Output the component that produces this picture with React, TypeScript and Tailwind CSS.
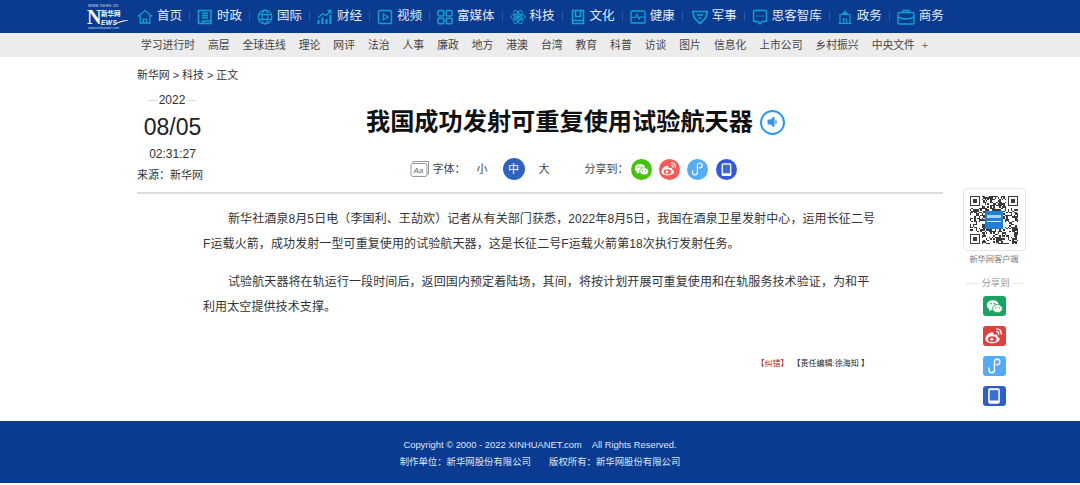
import { Fragment } from "react";

const cjk = "font-['Liberation_Sans','Noto_Sans_CJK_SC',sans-serif]";

function NavIcon({ name }: { name: string }) {
  const common = {
    width: 16,
    height: 16,
    viewBox: "0 0 16 16",
    fill: "none",
    stroke: "#12a2cc",
    strokeWidth: 1.2,
  };
  switch (name) {
    case "home":
      return (
        <svg {...common}>
          <path d="M1 7.500 8 1.500l7 6M3.200 6.500v7.500h9.600V6.500M6.300 14v-3.800h3.400V14" strokeWidth={1.3} />
        </svg>
      );
    case "news":
      return (
        <svg {...common}>
          <path d="M1.500 1.500h12.500v10.500H5.500v2.500H1.500zM5 4.200h6M5 6.600h6M5 9h6M14 12v2.500H5.500" strokeWidth={1.6} />
        </svg>
      );
    case "globe":
      return (
        <svg {...common}>
          <circle cx="8" cy="8" r="6.800" />
          <ellipse cx="8" cy="8" rx="3" ry="6.800" />
          <path d="M1.500 5.700h13M1.500 10.300h13" />
        </svg>
      );
    case "chart":
      return (
        <svg width={16} height={16} viewBox="0 0 16 16" fill="none" stroke="#12a2cc">
          <path d="M1.500 15v-4M5.500 15V8.500M9.500 15v-5M13.500 15V6" strokeWidth={2} />
          <path d="M1 8.500 6 4.500l3 2 4.500-4.500M10.500 1.500h3.500v3.500" strokeWidth={1.3} />
        </svg>
      );
    case "video":
      return (
        <svg {...common}>
          <rect x="1.500" y="1.500" width="13" height="13" rx="1.500" strokeWidth={1.4} />
          <path d="M6.300 5v6L11 8z" />
        </svg>
      );
    case "grid":
      return (
        <svg {...common}>
          <rect x="1" y="1.500" width="5.800" height="5.500" rx="1" strokeWidth={1.5} />
          <rect x="9.200" y="1.500" width="5.800" height="5.500" rx="1" strokeWidth={1.5} />
          <rect x="1" y="9.200" width="5.800" height="5.500" rx="1" strokeWidth={1.5} />
          <rect x="9.200" y="9.200" width="5.800" height="5.500" rx="1" strokeWidth={1.5} />
        </svg>
      );
    case "atom":
      return (
        <svg {...common} strokeWidth={1}>
          <ellipse cx="8" cy="8" rx="7.300" ry="3" />
          <ellipse cx="8" cy="8" rx="7.300" ry="3" transform="rotate(60 8 8)" />
          <ellipse cx="8" cy="8" rx="7.300" ry="3" transform="rotate(120 8 8)" />
          <circle cx="8" cy="8" r="1.500" fill="#12a2cc" />
        </svg>
      );
    case "book":
      return (
        <svg {...common}>
          <path d="M2.500 1.500h11v13h-11zM5.500 1.500v6h5v-6M2.500 11.500h11" strokeWidth={1.6} />
        </svg>
      );
    case "health":
      return (
        <svg {...common}>
          <rect x="1" y="2" width="14" height="12" rx="1" strokeWidth={1.4} />
          <path d="M1 8.500h4.500l1.500-3 2 4.500 1.500-2h4.500" />
        </svg>
      );
    case "shield":
      return (
        <svg {...common} className="ml-[2px]">
          <path d="M.5 2.500h15L13.500 9 8 14.500 2.500 9zM5 6h6M6.500 9h3" strokeWidth={1.7} />
        </svg>
      );
    case "chat":
      return (
        <svg {...common}>
          <path d="M2.500 1.500h11a1 1 0 0 1 1 1v9a1 1 0 0 1-1 1h-3.500L8 15l-2-2.500H2.500a1 1 0 0 1-1-1v-9a1 1 0 0 1 1-1z" strokeWidth={1.4} />
          <circle cx="5" cy="7" r=".8" fill="#12a2cc" stroke="none" />
          <circle cx="8" cy="7" r=".8" fill="#12a2cc" stroke="none" />
          <circle cx="11" cy="7" r=".8" fill="#12a2cc" stroke="none" />
        </svg>
      );
    case "gov":
      return (
        <svg {...common}>
          <path d="M3 14.500V5.500h10v9M1.500 14.500h13M8 1v4.500M5 5.500 8 2.500l3 3M6.500 14.500v-4.500h3v4.500" />
        </svg>
      );
    default:
      return (
        <svg {...common} strokeWidth={1.4} width={18} viewBox="0 0 18 16">
          <rect x="1" y="3.500" width="16" height="11.500" rx="1.500" />
          <path d="M6 3.500V1.500h6v2M1 8c5 2.500 11 2.500 16 0M9 9v1.500" />
        </svg>
      );
  }
}

const navItems = [
  ["home", "首页"],
  ["news", "时政"],
  ["globe", "国际"],
  ["chart", "财经"],
  ["video", "视频"],
  ["grid", "富媒体"],
  ["atom", "科技"],
  ["book", "文化"],
  ["health", "健康"],
  ["shield", "军事"],
  ["chat", "思客智库"],
  ["gov", "政务"],
  ["bag", "商务"],
];

const subItems = [
  "学习进行时", "高层", "全球连线", "理论", "网评", "法治", "人事", "廉政", "地方", "港澳",
  "台湾", "教育", "科普", "访谈", "图片", "信息化", "上市公司", "乡村振兴", "中央文件",
];

function Wechat({ size, bg }: { size: number; bg: string }) {
  return (
    <svg width={size} height={size} viewBox="0 0 20 20">
      <ellipse cx="8" cy="8.500" rx="7" ry="6" fill="#fff" />
      <path d="M4 12.500 3.500 16l3.500-2.500z" fill="#fff" />
      <ellipse cx="13.500" cy="12.500" rx="5.800" ry="4.800" fill="#fff" stroke={bg} strokeWidth="1" />
      <circle cx="5.800" cy="6.500" r="1" fill={bg} />
      <circle cx="10" cy="6.500" r="1" fill={bg} />
      <circle cx="11.500" cy="11.500" r=".8" fill={bg} />
      <circle cx="15.500" cy="11.500" r=".8" fill={bg} />
    </svg>
  );
}

function Weibo({ size, bg }: { size: number; bg: string }) {
  return (
    <svg width={size} height={size} viewBox="0 0 20 20" fill="none">
      <path d="M8 18c-4.200 0-7.500-2-7.500-4.800C.5 10 5.500 5 8.500 6c1.500.5 1 2.200.8 3 1.500-.8 4.500-1.200 4.700.8.100.6-.2 1 .1 1.200 1.200.3 2.200 1.200 2.200 2.500C16.300 16 12.500 18 8 18z" fill="#fff" />
      <ellipse cx="8" cy="13.500" rx="4.800" ry="3.200" fill={bg} />
      <circle cx="7.500" cy="13.700" r="1.700" fill="#fff" />
      <path d="M13 2c3 0 5.500 2.500 5 6M13 5c1.500 0 2.500 1 2.200 2.800" stroke="#fff" strokeWidth="1.500" strokeLinecap="round" />
    </svg>
  );
}

function Mini({ size }: { size: number }) {
  return (
    <svg width={size} height={size} viewBox="0 0 20 20" fill="none">
      <path d="M4.500 12v2.500a3 3 0 0 0 6 0v-9a3 3 0 1 1 3 3h-1" stroke="#fff" strokeWidth="1.500" strokeLinecap="round" />
    </svg>
  );
}

function Phone({ size }: { size: number }) {
  return (
    <svg width={size} height={size} viewBox="0 0 20 20" fill="none">
      <rect x="3.500" y="1.500" width="13" height="17" rx="2" fill="#fff" />
      <rect x="5.200" y="3.500" width="9.600" height="11.500" fill="#3b6fd0" />
    </svg>
  );
}

// rough QR pattern, seeded so it draws the same every time
function QrCode() {
  const cells: [number, number][] = [];
  let seed = 37;
  for (let y = 0; y < 33; y++) {
    for (let x = 0; x < 33; x++) {
      seed = (seed * 1103515245 + 12345) & 0x7fffffff;
      const corner = (x < 8 && y < 8) || (x > 24 && y < 8) || (x < 8 && y > 24);
      if (!corner && (seed >> 16) % 2 === 0) cells.push([x, y]);
    }
  }
  return (
    <svg width="48" height="48" viewBox="0 0 33 33" shapeRendering="crispEdges">
      {cells.map(([x, y]) => (
        <rect key={`${x}-${y}`} x={x} y={y} width="1" height="1" fill="#3a3a3a" />
      ))}
      {[[0, 0], [26, 0], [0, 26]].map(([x, y]) => (
        <Fragment key={`${x}${y}`}>
          <rect x={x + 0.5} y={y + 0.5} width="6" height="6" fill="none" stroke="#3a3a3a" />
          <rect x={x + 2} y={y + 2} width="3" height="3" fill="#3a3a3a" />
        </Fragment>
      ))}
      <rect x="10" y="10" width="13" height="13" rx="1" fill="#1f7fd6" />
      <rect x="12" y="13" width="9" height="2" fill="#a9d4f5" />
      <rect x="12" y="17" width="9" height=".8" fill="#e4f2fc" />
    </svg>
  );
}

function Logo() {
  return (
    <div className="w-[41px] flex flex-col text-white leading-none relative">
      <div className="text-[4.500px] leading-[6px] tracking-[0.3px] text-[#c7d4ea] whitespace-nowrap pl-[1px]">www.news.cn</div>
      <div className="flex h-[17px]">
        <span className="text-[20px] font-bold font-['Liberation_Serif',serif] leading-[17px] w-[14px]">N</span>
        <div className="flex flex-col">
          <span className="text-[6.500px] font-bold leading-[10px] whitespace-nowrap">新华网</span>
          <span className="text-[6.500px] font-bold italic leading-[7px] tracking-[0.5px]">EWS</span>
        </div>
      </div>
      <svg className="absolute left-[27px] top-[12px]" width="15" height="10" viewBox="0 0 15 10">
        <path d="M0 9.500C4 8.500 9 6 15 5.500 10 4.500 4 6.500 0 9.500z" fill="#fff" />
      </svg>
      <div className="text-[3.500px] leading-[5px] text-[#c7d4ea] whitespace-nowrap pl-[1px]">www.xinhuanet.com</div>
    </div>
  );
}

export default function App() {
  return (
    <div className={`w-[1080px] h-[485px] overflow-hidden bg-white ${cjk}`}>
      <div className="h-[33px] bg-[#0a3b91] flex items-center pl-[87px]">
        <Logo />
        <div className="flex items-center ml-[9px]">
          {navItems.map(([icon, label], i) => (
            <Fragment key={label}>
              {i > 0 && <span className="w-px h-[9px] bg-[#2a5aa8] mx-[7px]" />}
              <span className="flex items-center gap-[4px] text-[12.500px] text-[#e3ecf7] whitespace-nowrap">
                <NavIcon name={icon} />
                {label}
              </span>
            </Fragment>
          ))}
        </div>
      </div>

      <div className="h-[24px] bg-[#ececec] flex items-center pl-[141px] pt-[1px] gap-[13px] text-[10.800px] text-[#444] whitespace-nowrap">
        {subItems.map((s) => (
          <span key={s}>{s}</span>
        ))}
        <span className="text-[#666] ml-[-6px]">+</span>
      </div>

      <div className="flex h-[364px]">
        <div className="w-[806px] ml-[137px]">
          <div className="pt-[11px] text-[10.900px] leading-[15px] text-[#333]">新华网 &gt; 科技 &gt; 正文</div>

          <div className="flex h-[105px] mt-[6px] border-b-2 border-[#dcdcdc]">
            <div className="w-[65px] text-[#333] whitespace-nowrap">
              <div className="flex items-center justify-center gap-[2px] text-[12px] leading-[14px] mt-[4px] pl-[5px]">
                <span className="w-[10px] h-px bg-[#ddd]" />
                2022
                <span className="w-[10px] h-px bg-[#ddd]" />
              </div>
              <div className="text-center text-[23px] leading-[28px] mt-[6px] pl-[6px] text-[#222]">08/05</div>
              <div className="text-center text-[12px] leading-[14px] mt-[6px] pl-[6px]">02:31:27</div>
              <div className="text-[11px] leading-[14px] mt-[7px]">来源：新华网</div>
            </div>
            <div className="flex-1 flex flex-col items-center">
              <div className="flex items-center gap-[7px] ml-[6px] mt-[18px] h-[30px]">
                <h1 className="text-[24.200px] font-bold text-[#111] leading-[30px] whitespace-nowrap">我国成功发射可重复使用试验航天器</h1>
                <span className="w-[25px] h-[25px] rounded-full border-2 border-[#2f96ef] flex items-center justify-center">
                  <svg width="12" height="12" viewBox="0 0 12 12">
                    <path d="M1 4h2.500L7 1v10L3.500 8H1zM8.500 4c1 1 1 3 0 4" fill="#2f96ef" stroke="#2f96ef" />
                  </svg>
                </span>
              </div>
              <div className="flex items-center mt-[21px] h-[22px] ml-[1px] text-[11px] text-[#444] whitespace-nowrap">
                <svg width="20" height="18" viewBox="0 0 20 18" fill="none" stroke="#999">
                  <path d="M3 3V1.500h15.500V14H17" />
                  <rect x="1" y="3.500" width="16" height="13" rx="2" fill="#fff" />
                  <text x="3.500" y="13" fontSize="8" fontStyle="italic" fill="#666" stroke="none">Aa</text>
                </svg>
                <span className="ml-[3px]">字体：</span>
                <span className="ml-[11px]">小</span>
                <span className="ml-[15px] w-[22px] h-[22px] rounded-full bg-[#2f62bd] text-white flex items-center justify-center">中</span>
                <span className="ml-[14px]">大</span>
                <span className="ml-[35px]">分享到：</span>
                <span className="ml-[2px] w-[21px] h-[21px] rounded-full bg-[#43c30e] flex items-center justify-center"><Wechat size={15} bg="#43c30e" /></span>
                <span className="ml-[7px] w-[21px] h-[21px] rounded-full bg-[#f45a57] flex items-center justify-center"><Weibo size={16} bg="#f45a57" /></span>
                <span className="ml-[7px] w-[21px] h-[21px] rounded-full bg-[#55abf5] flex items-center justify-center"><Mini size={16} /></span>
                <span className="ml-[8px] w-[21px] h-[21px] rounded-full bg-[#3458d8] flex items-center justify-center"><Phone size={15} /></span>
              </div>
            </div>
          </div>

          <div className="ml-[66px] w-[673px] pt-[13px] text-[12px] leading-[25px] text-[#333]">
            <p className="indent-[25px] tracking-[0.1px]">
              新华社酒泉8月5日电（李国利、王劼欢）记者从有关部门获悉，2022年8月5日，我国在酒泉卫星发射中心，运用长征二号F运载火箭，成功发射一型可重复使用的试验航天器，这是长征二号F运载火箭第18次执行发射任务。
            </p>
            <p className="indent-[25px] tracking-[0.1px] mt-[13px]">
              试验航天器将在轨运行一段时间后，返回国内预定着陆场，其间，将按计划开展可重复使用和在轨服务技术验证，为和平利用太空提供技术支撑。
            </p>
            <div className="mt-[38px] flex justify-end gap-[4px] pr-[7px] text-[8px] leading-[12px] whitespace-nowrap">
              <span className="text-[#a3262a]">【纠错】</span>
              <span className="text-[#222]">【责任编辑:徐海知 】</span>
            </div>
          </div>
        </div>

        <div className="ml-[19px] mt-[131px] w-[64px] flex flex-col items-center">
          <div className="h-[63px] w-[63px] rounded-[4px] border border-[#e5e5e5] flex items-center justify-center">
            <QrCode />
          </div>
          <div className="text-[8.200px] leading-[12px] mt-[3px] text-[#777] whitespace-nowrap">新华网客户端</div>
          <div className="flex items-center gap-[4px] mt-[11px] text-[9.300px] leading-[12px] text-[#999]">
            <span className="w-[13px] h-px bg-[#e5e5e5]" />
            分享到
            <span className="w-[10px] h-px bg-[#e5e5e5]" />
          </div>
          <span className="mt-[7px] w-[23px] h-[20px] rounded-[3px] bg-[#1aa35f] flex items-center justify-center"><Wechat size={17} bg="#1aa35f" /></span>
          <span className="mt-[10px] w-[23px] h-[20px] rounded-[3px] bg-[#e0413f] flex items-center justify-center"><Weibo size={18} bg="#e0413f" /></span>
          <span className="mt-[10px] w-[23px] h-[20px] rounded-[3px] bg-[#55abf5] flex items-center justify-center"><Mini size={18} /></span>
          <span className="mt-[10px] w-[23px] h-[20px] rounded-[3px] bg-[#2f5fc4] flex items-center justify-center"><Phone size={18} /></span>
        </div>
      </div>

      <div className="h-[62px] pt-[1px] bg-[#0a3b91] text-[#dfe8f5] text-[9.400px] leading-[17px] flex flex-col items-center justify-center">
        <div>Copyright © 2000 - 2022 XINHUANET.com &nbsp;&nbsp; All Rights Reserved.</div>
        <div>制作单位：新华网股份有限公司 &nbsp;&nbsp;&nbsp;&nbsp;&nbsp; 版权所有：新华网股份有限公司</div>
      </div>
    </div>
  );
}
